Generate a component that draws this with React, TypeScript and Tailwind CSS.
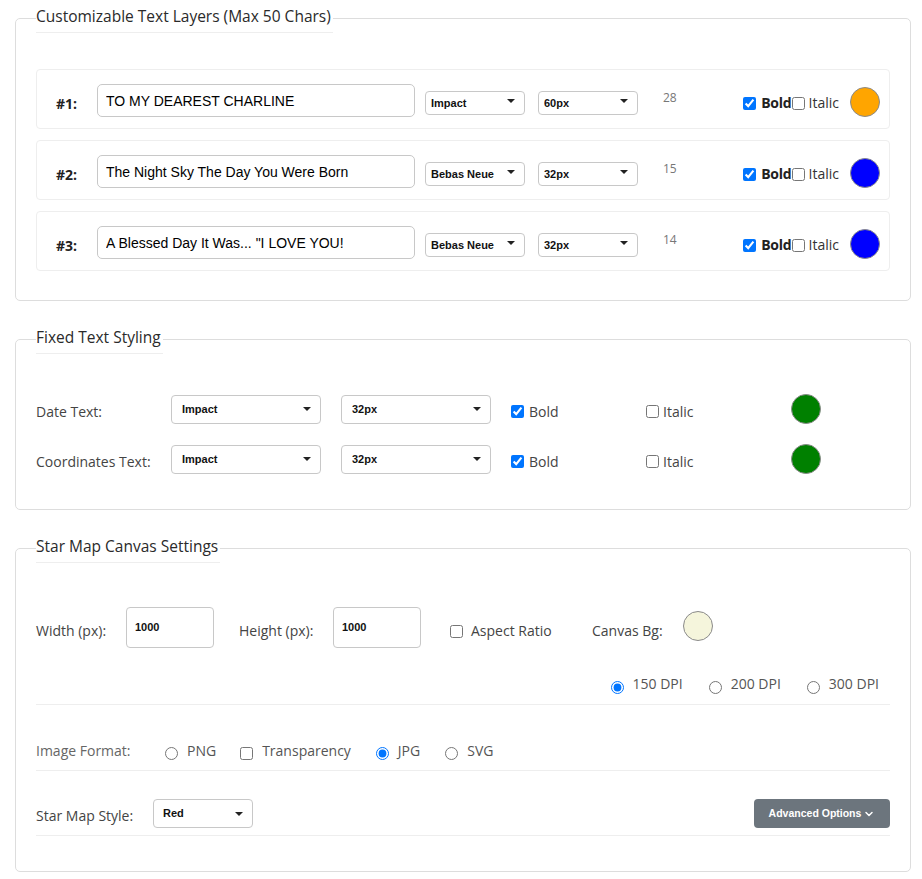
import React from "react";
import { ChevronDown } from "lucide-react";

const sans = "font-['Open_Sans',sans-serif]";
const arial = "font-['Liberation_Sans',Arial,sans-serif]";

interface SelectProps {
  value: string;
  className?: string;
  pad?: string;
}

// native select look with our own little triangle
const FakeSelect: React.FC<SelectProps> = ({ value, className = "", pad = "pl-[10px]" }) => (
  <div className={`relative shrink-0 ${className}`}>
    <select
      defaultValue={value}
      className={`appearance-none w-full h-full bg-white border border-[#c8c8c8] rounded-[4px] ${pad} pr-6 text-[11px] font-bold text-[#111] ${arial}`}
    >
      <option>{value}</option>
    </select>
    <svg
      className="pointer-events-none absolute right-[10px] top-1/2 -translate-y-1/2"
      width="8"
      height="4"
      viewBox="0 0 8 4"
    >
      <path d="M0 0H8L4 4Z" fill="#222" />
    </svg>
  </div>
);

const Dot: React.FC<{ color: string; className?: string }> = ({ color, className = "" }) => (
  <div
    className={`w-[30px] h-[30px] rounded-full border border-[#8a8a8a] shrink-0 ${className}`}
    style={{ backgroundColor: color }}
  />
);

const Legend: React.FC<{ children: React.ReactNode }> = ({ children }) => (
  <legend className={`h-[29px] pb-1 pr-[2px] border-b border-[#eee] text-[15.5px] leading-6 text-[#2a2a2a] ${sans}`}>
    {children}
  </legend>
);

const layers = [
  { n: "#1:", text: "TO MY DEAREST CHARLINE", font: "Impact", size: "60px", count: 28, color: "#ffa500" },
  { n: "#2:", text: "The Night Sky The Day You Were Born", font: "Bebas Neue", size: "32px", count: 15, color: "#0000ff" },
  { n: "#3:", text: 'A Blessed Day It Was... "I LOVE YOU!', font: "Bebas Neue", size: "32px", count: 14, color: "#0000ff" },
];

const fixedRows = [
  { label: "Date Text:" },
  { label: "Coordinates Text:" },
];

export default function App() {
  return (
    <div className={`min-h-screen bg-white pl-[15px] pt-[4px] pb-4 ${sans}`}>
      {/* Customizable layers */}
      <fieldset className="w-[896px] border border-[#ddd] rounded-[5px] px-5 pb-[29px]">
        <Legend>Customizable Text Layers (Max 50 Chars)</Legend>
        <div className="mt-[36px] flex flex-col gap-[11px]">
          {layers.map((l) => (
            <div
              key={l.n}
              className="h-[60px] flex items-center border border-[#eee] rounded-[4px] pl-[19px] pr-[9px] pt-[3px]"
            >
              <span className={`w-[41px] shrink-0 pt-[6px] text-sm font-bold text-[#222] ${sans}`}>{l.n}</span>
              <input
                defaultValue={l.text}
                className={`w-[318px] h-[33px] shrink-0 border border-[#c8c8c8] rounded-[5px] px-[8px] text-sm text-black ${arial}`}
              />
              <FakeSelect value={l.font} pad="pl-[5px]" className="ml-[10px] w-[100px] h-[24px]" />
              <FakeSelect value={l.size} pad="pl-[5px]" className="ml-[13px] w-[100px] h-[24px]" />
              <span className="ml-[25px] pb-[5px] text-xs text-[#777]">{l.count}</span>
              <div className="ml-auto flex items-center pt-[5px]">
                <input type="checkbox" defaultChecked className="w-[13px] h-[13px]" />
                <span className="ml-[5px] text-sm font-bold tracking-[-0.2px] text-[#222]">Bold</span>
                <input type="checkbox" className="w-[13px] h-[13px]" />
                <span className="ml-[4px] text-sm text-[#333]">Italic</span>
              </div>
              <Dot color={l.color} className="ml-[11px] mt-[3px]" />
            </div>
          ))}
        </div>
      </fieldset>

      {/* Fixed text */}
      <fieldset className="mt-6 w-[896px] border border-[#ddd] rounded-[5px] px-5 pb-[35px]">
        <Legend>Fixed Text Styling</Legend>
        <div className="mt-[40px] flex flex-col gap-5">
          {fixedRows.map((r) => (
            <div key={r.label} className="h-[30px] flex items-center">
              <span className="w-[135px] shrink-0 pt-[6px] text-sm text-[#444]">{r.label}</span>
              <FakeSelect value="Impact" className="w-[150px] h-[29px]" />
              <FakeSelect value="32px" className="ml-[20px] w-[150px] h-[29px]" />
              <label className="ml-[20px] w-[135px] shrink-0 flex items-center pt-[5px]">
                <input type="checkbox" defaultChecked className="w-[13px] h-[13px]" />
                <span className="ml-[5px] text-sm text-[#444]">Bold</span>
              </label>
              <label className="w-[145px] shrink-0 flex items-center pt-[5px]">
                <input type="checkbox" className="w-[13px] h-[13px]" />
                <span className="ml-[4px] text-sm text-[#444]">Italic</span>
              </label>
              <Dot color="#008000" />
            </div>
          ))}
        </div>
      </fieldset>

      {/* Canvas settings */}
      <fieldset className="mt-6 w-[896px] border border-[#ddd] rounded-[5px] px-5 pb-[35px]">
        <Legend>Star Map Canvas Settings</Legend>
        <div className="mt-[44px] h-[41px] flex items-center">
          <span className="w-[90px] shrink-0 pt-[7px] text-sm text-[#444]">Width (px):</span>
          <input
            defaultValue="1000"
            className={`w-[88px] h-[41px] shrink-0 border border-[#c8c8c8] rounded-[4px] px-[8px] pb-[1px] text-[11px] font-bold text-[#111] ${arial}`}
          />
          <span className="ml-[25px] w-[94px] shrink-0 pt-[7px] text-sm text-[#444]">Height (px):</span>
          <input
            defaultValue="1000"
            className={`w-[88px] h-[41px] shrink-0 border border-[#c8c8c8] rounded-[4px] px-[8px] pb-[1px] text-[11px] font-bold text-[#111] ${arial}`}
          />
          <label className="ml-[29px] w-[142px] shrink-0 flex items-center pt-[7px]">
            <input type="checkbox" className="w-[13px] h-[13px]" />
            <span className="ml-[8px] text-sm text-[#444]">Aspect Ratio</span>
          </label>
          <span className="w-[91px] shrink-0 pt-[7px] text-sm text-[#444]">Canvas Bg:</span>
          <Dot color="#f5f5dc" className="mb-[4px]" />
        </div>

        <div className="pt-[24px] pb-[8px] border-b border-[#eee]">
          <div className="h-6 flex items-center justify-end pr-[11px] text-sm text-[#555]">
            {["150 DPI", "200 DPI", "300 DPI"].map((d, i) => (
              <label key={d} className={`flex items-center ${i > 0 ? "ml-[26px]" : ""}`}>
                <input type="radio" name="dpi" defaultChecked={i === 0} className="w-[13px] h-[13px] mt-[6px]" />
                <span className="ml-[9px]">{d}</span>
              </label>
            ))}
          </div>
        </div>

        <div className="pt-[34px] pb-[7px] border-b border-[#eee]">
          <div className="h-6 flex items-center text-sm text-[#555]">
            <span className="w-[129px] shrink-0 text-[#666]">Image Format:</span>
            <label className="flex items-center">
              <input type="radio" name="fmt" className="w-[13px] h-[13px] mt-[5px]" />
              <span className="ml-[9px]">PNG</span>
            </label>
            <label className="ml-[24px] flex items-center">
              <input type="checkbox" className="w-[13px] h-[13px] mt-[5px]" />
              <span className="ml-[9px]">Transparency</span>
            </label>
            <label className="ml-[25px] flex items-center">
              <input type="radio" name="fmt" defaultChecked className="w-[13px] h-[13px] mt-[5px]" />
              <span className="ml-[9px]">JPG</span>
            </label>
            <label className="ml-[25px] flex items-center">
              <input type="radio" name="fmt" className="w-[13px] h-[13px] mt-[5px]" />
              <span className="ml-[9px]">SVG</span>
            </label>
          </div>
        </div>

        <div className="pt-[28px] pb-[7px] border-b border-[#eee]">
          <div className="h-[29px] flex items-center">
            <span className="w-[117px] shrink-0 pt-[5px] text-sm text-[#444]">Star Map Style:</span>
            <FakeSelect value="Red" pad="pl-[9px]" className="w-[100px] h-[29px]" />
            <button
              className={`ml-auto w-[136px] h-[29px] flex items-center justify-center gap-[2px] bg-[#6c757d] rounded-[4px] text-white text-[10.5px] font-bold ${arial}`}
            >
              Advanced Options
              <ChevronDown className="w-[12px] h-[12px]" strokeWidth={3} />
            </button>
          </div>
        </div>
      </fieldset>
    </div>
  );
}
